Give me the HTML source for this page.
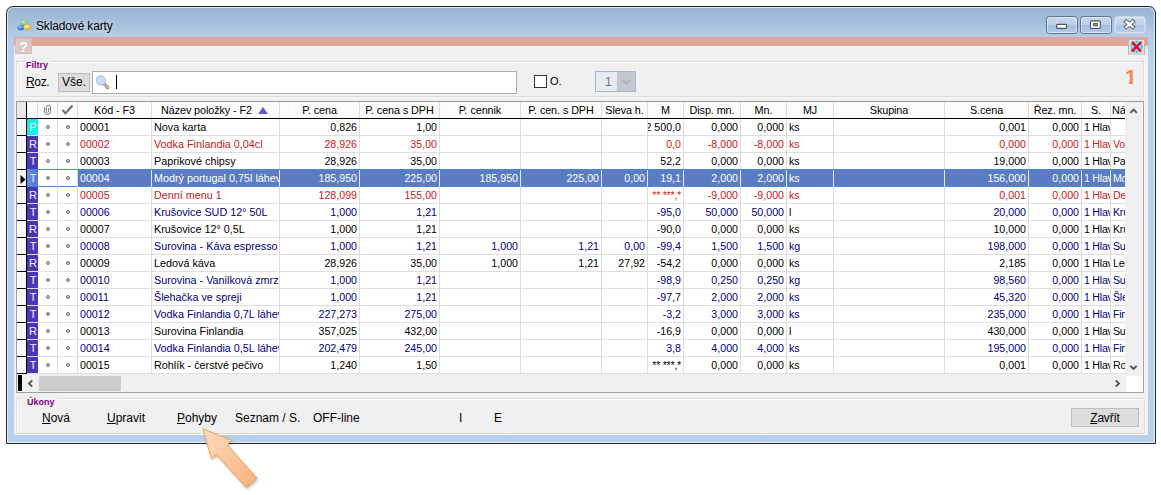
<!DOCTYPE html>
<html lang="cs">
<head>
<meta charset="utf-8">
<title>Skladové karty</title>
<style>
html,body{margin:0;padding:0;background:#fff;}
body{width:1161px;height:495px;position:relative;overflow:hidden;font-family:"Liberation Sans",sans-serif;color:#000;}
.abs,.abs *{position:absolute;}
div{box-sizing:border-box;}
#win{position:absolute;left:6px;top:6px;width:1150px;height:438px;border:1px solid #20262c;border-radius:7px 7px 0 0;
 background:linear-gradient(#98b3d2 0px,#a3bcd9 12px,#b2cae6 26px,#b6ceea 34px,#bad2ec 60px,#b7d0ec 100%);box-shadow:inset 0 0 0 1px rgba(255,255,255,.65);}
#client{position:absolute;left:14px;top:37px;width:1134px;height:398px;background:#f0f0f0;}
#title{position:absolute;left:36px;top:18px;font-size:12px;line-height:16px;letter-spacing:-.15px;white-space:nowrap;color:#000;text-shadow:0 0 5px rgba(255,255,255,.75);}
#pink{position:absolute;left:14px;top:37px;width:1134px;height:9px;background:#dea69b;}
#help{position:absolute;left:15px;top:38px;width:17px;height:16px;background:#dcc9c5;border:1px solid #d3bdb8;color:#fff;font-weight:bold;font-size:14px;line-height:17px;text-align:center;}
.cap{position:absolute;top:16px;height:18px;width:32px;border:1px solid #5a7391;border-radius:3.5px;
 background:linear-gradient(#c6d8ed 0%,#bdd1e9 46%,#a4bddb 52%,#b3cae4 100%);box-shadow:inset 0 0 0 1px rgba(255,255,255,.5);}
.gb{position:absolute;border:1px solid #dcdcdc;box-shadow:inset 1px 1px 0 #fafafa, 1px 1px 0 #fafafa;}
.gbl{position:absolute;font-size:9px;font-weight:bold;color:#800080;line-height:10px;background:#f0f0f0;padding:0 2px;white-space:nowrap;}
.t13{position:absolute;font-size:12px;line-height:16px;white-space:nowrap;}
.btn{position:absolute;background:#dddddd;border:1px solid #bdbdbd;font-size:12px;text-align:center;}
u{text-decoration:underline;text-underline-offset:1px;}
#grid{position:absolute;left:16px;top:101px;width:1128px;height:292px;background:#fff;border:1px solid #a0a0a0;border-top-color:#9a9a9a;overflow:hidden;}
#gridin{position:absolute;left:-17px;top:-102px;width:1161px;height:495px;}
.row{position:absolute;left:17px;width:1108px;height:17px;border-bottom:1px solid #dedede;font-size:10.65px;line-height:16px;letter-spacing:0;white-space:nowrap;overflow:hidden;}
.row .c{position:absolute;top:0;height:16px;overflow:hidden;white-space:nowrap;}
.vl{position:absolute;top:102px;width:1px;height:272px;background:#dcdcdc;}
.hd{position:absolute;top:102px;height:16px;font-size:10.8px;line-height:17px;letter-spacing:-.08px;text-align:center;white-space:nowrap;overflow:hidden;color:#000;}
.ind{position:absolute;left:17px;width:9px;height:17px;background:#f7f7f7;border-bottom:1px solid #000;box-shadow:inset 1px 1px 0 #fff;}
.dot{position:absolute;top:6px;width:4px;height:4px;border-radius:50%;border:1px solid #707070;background:#d0d0d0;}
</style>
</head>
<body>
<div id="win"></div>
<div id="client"></div>
<div id="pink"></div>
<svg style="position:absolute;left:16px;top:19px" width="17" height="12.4" viewBox="0 0 17 14" preserveAspectRatio="none">
<defs>
<radialGradient id="gb" cx="40%" cy="35%" r="70%"><stop offset="0" stop-color="#8fc4ff"/><stop offset="1" stop-color="#1f5fd0"/></radialGradient>
<radialGradient id="gy" cx="40%" cy="35%" r="70%"><stop offset="0" stop-color="#fff0a0"/><stop offset="1" stop-color="#d9a520"/></radialGradient>
<radialGradient id="gg" cx="40%" cy="35%" r="70%"><stop offset="0" stop-color="#d8ffb0"/><stop offset="1" stop-color="#4cae3c"/></radialGradient>
</defs>
<ellipse cx="8.2" cy="4.4" rx="3.2" ry="2.9" fill="url(#gg)"/>
<ellipse cx="4.8" cy="9.6" rx="3.5" ry="3.2" fill="url(#gb)"/>
<ellipse cx="11.4" cy="9.4" rx="3.8" ry="3.4" fill="url(#gy)"/>
</svg>
<div id="title">Skladové karty</div>
<div class="cap" style="left:1046px"></div>
<div class="cap" style="left:1080px"></div>
<div class="cap" style="left:1114px;border-color:#c4d5e9;background:linear-gradient(#c9daee 0%,#c0d3ea 46%,#b0c7e2 52%,#bad0e8 100%);box-shadow:inset 0 0 0 1px rgba(255,255,255,.35)"></div>
<svg style="position:absolute;left:1040px;top:10px" width="110" height="30" viewBox="0 0 110 30">
<rect x="16.6" y="14.4" width="10" height="4" rx="1" fill="#fff" stroke="#4c525c" stroke-width="1.1"/>
<rect x="50.5" y="10.9" width="9.8" height="7.6" rx="1" fill="#fff" stroke="#4c525c" stroke-width="1.1"/>
<rect x="53.4" y="13.6" width="4" height="2.2" fill="#8d96a6" stroke="#4c525c" stroke-width=".9"/>
<g fill="none">
<path d="M84.6 10.4 L94.4 18.2 M94.4 10.4 L84.6 18.2" stroke="#5c626c" stroke-width="4.2"/>
<path d="M85.4 11 L93.6 17.6 M93.6 11 L85.4 17.6" stroke="#fff" stroke-width="2.3"/>
</g>
</svg>
<div id="help">?</div>
<svg style="position:absolute;left:1128px;top:39px" width="17" height="16" viewBox="0 0 17 16">
<rect x="0.5" y="0.5" width="16" height="14.5" fill="#e2e2e2" stroke="#b8b8b8"/>
<circle cx="8.6" cy="7.8" r="5.4" fill="#8fd6f2" stroke="#30a6dc" stroke-width="1.2" stroke-dasharray="2.2 1.2"/>
<path d="M4.6 3.6 L12.4 11.8 M12.6 3.6 L4.4 11.8" stroke="#dc1230" stroke-width="2.4" stroke-linecap="round"/>
</svg>
<div class="gb" style="left:16px;top:61px;width:1128px;height:36px"></div>
<div class="gbl" style="left:24px;top:60px">Filtry</div>
<div class="t13" style="left:26px;top:74px;letter-spacing:-.35px"><u>R</u>oz.</div>
<div class="btn" style="left:58px;top:73px;width:32px;height:19px;line-height:17px">Vše.</div>
<div style="position:absolute;left:92px;top:71px;width:425px;height:23px;background:#fff;border:1px solid #abadb3;"></div>
<svg style="position:absolute;left:94px;top:73px" width="18" height="18" viewBox="0 0 18 18">
<path d="M10 10.6 L13.6 14.6" stroke="#9a8456" stroke-width="3.2" stroke-linecap="round"/>
<path d="M10 10.6 L13.6 14.6" stroke="#d8bd84" stroke-width="1.8" stroke-linecap="round"/>
<circle cx="6.8" cy="7.4" r="4.5" fill="#c9defa" stroke="#a9c5ea" stroke-width="1.3"/>
</svg>
<div style="position:absolute;left:116px;top:75px;width:1px;height:14px;background:#000"></div>
<div style="position:absolute;left:534px;top:75px;width:13px;height:13px;background:#fff;border:1px solid #333"></div>
<div style="position:absolute;left:550px;top:74px;font-size:11px;line-height:14px">O.</div>
<div style="position:absolute;left:595px;top:71px;width:41px;height:21px;background:#e6eaf2;border:1px solid #a8b4ca"></div>
<div style="position:absolute;left:617px;top:72px;width:18px;height:19px;background:#c3c7cf"></div>
<div style="position:absolute;left:605px;top:75px;font-size:12px;line-height:15px;color:#777">1</div>
<svg style="position:absolute;left:621px;top:78px" width="11" height="8"><path d="M1.5 1.5 L5.5 5.5 L9.5 1.5" fill="none" stroke="#aab0ba" stroke-width="1.6"/></svg>
<div style="position:absolute;left:1125px;top:66px;font-size:21px;line-height:22px;font-weight:bold;color:#ee8a50">1</div>
<div style="position:absolute;left:1125px;top:82px;width:4px;height:3px;background:#f0f0f0"></div>
<div style="position:absolute;left:1133px;top:82px;width:5px;height:3px;background:#f0f0f0"></div>
<div id="grid"><div id="gridin">
<div style="position:absolute;left:17px;top:102px;width:1108px;height:16px;background:#fbfbfb"></div>
<div style="position:absolute;left:17px;top:102px;width:9px;height:16px;background:#e9e9e9"></div>
<div class="hd" style="left:78px;width:73px">Kód - F3</div>
<div class="hd" style="left:152px;width:127px;text-align:left;padding-left:9px">Název položky - F2</div>
<svg style="position:absolute;left:258px;top:107px" width="10" height="7"><path d="M5 0 L10 7 L0 7 Z" fill="#5f5cc0"/></svg>
<div class="hd" style="left:280px;width:79px">P. cena</div>
<div class="hd" style="left:360px;width:79px">P. cena s DPH</div>
<div class="hd" style="left:440px;width:80px">P. cennik</div>
<div class="hd" style="left:521px;width:80px">P. cen. s DPH</div>
<div class="hd" style="left:602px;width:45px">Sleva h.</div>
<div class="hd" style="left:648px;width:35px">M</div>
<div class="hd" style="left:684px;width:56px">Disp. mn.</div>
<div class="hd" style="left:741px;width:45px">Mn.</div>
<div class="hd" style="left:787px;width:46px">MJ</div>
<div class="hd" style="left:834px;width:110px">Skupina</div>
<div class="hd" style="left:945px;width:83px">S.cena</div>
<div class="hd" style="left:1029px;width:52px">Řez. mn.</div>
<div class="hd" style="left:1082px;width:28px">S.</div>
<div class="hd" style="left:1111px;width:14px;text-align:left;padding-left:1px">Ná.</div>
<svg style="position:absolute;left:42px;top:103px" width="11" height="13" viewBox="0 0 11 13"><path d="M2.5 4.5 V8.5 A3 3 0 0 0 8.5 8.5 V3.8 A2.2 2.2 0 0 0 4.3 3.8 V8.3 A1.2 1.2 0 0 0 6.7 8.3 V4.5" fill="none" stroke="#7a7a7a" stroke-width="1"/></svg>
<svg style="position:absolute;left:61px;top:104px" width="13" height="11" viewBox="0 0 13 11"><path d="M1.5 6 L4.5 9.3 L11.5 1.5" fill="none" stroke="#6c6c6c" stroke-width="2"/></svg>
<div class="row" style="top:119px;color:#000000;"><div class="c" style="left:10px;width:11px;background:#0cf0e6;color:#f4f4ff;text-align:center;font-size:11px;letter-spacing:0;padding-left:1px">P</div><div class="c" style="left:21px;width:19px;background:#fff"><div class="dot" style="left:8px"></div></div><div class="c" style="left:41px;width:19px;background:#fff"><div class="dot" style="left:8px"></div></div><div class="c" style="left:61px;width:73px;text-align:left;padding-left:2px;">00001</div><div class="c" style="left:135px;width:127px;text-align:left;padding-left:2px;font-size:10.8px;">Nova karta</div><div class="c" style="left:263px;width:79px;text-align:right;padding-right:2px;">0,826</div><div class="c" style="left:343px;width:79px;text-align:right;padding-right:2px;">1,00</div><div class="c" style="left:423px;width:80px;text-align:right;padding-right:2px;"></div><div class="c" style="left:504px;width:80px;text-align:right;padding-right:2px;"></div><div class="c" style="left:585px;width:45px;text-align:right;padding-right:2px;"></div><div class="c" style="left:631px;width:35px;text-align:right;padding-right:2px;display:flex;justify-content:flex-end;">2 500,0</div><div class="c" style="left:667px;width:56px;text-align:right;padding-right:2px;">0,000</div><div class="c" style="left:724px;width:45px;text-align:right;padding-right:2px;">0,000</div><div class="c" style="left:770px;width:46px;text-align:left;padding-left:2px;">ks</div><div class="c" style="left:817px;width:110px;text-align:left;padding-left:2px;"></div><div class="c" style="left:928px;width:83px;text-align:right;padding-right:2px;">0,001</div><div class="c" style="left:1012px;width:52px;text-align:right;padding-right:2px;">0,000</div><div class="c" style="left:1065px;width:28px;text-align:left;padding-left:2px;letter-spacing:-.25px;">1 Hlavní</div><div class="c" style="left:1094px;width:34px;text-align:left;padding-left:2px;letter-spacing:-.25px;"></div></div>
<div class="row" style="top:136px;color:#cc2020;"><div class="c" style="left:10px;width:11px;background:#4537b4;color:#f4f4ff;text-align:center;font-size:11px;letter-spacing:0;padding-left:1px">R</div><div class="c" style="left:21px;width:19px;background:#fff"><div class="dot" style="left:8px"></div></div><div class="c" style="left:41px;width:19px;background:#fff"><div class="dot" style="left:8px"></div></div><div class="c" style="left:61px;width:73px;text-align:left;padding-left:2px;">00002</div><div class="c" style="left:135px;width:127px;text-align:left;padding-left:2px;font-size:10.8px;">Vodka Finlandia 0,04cl</div><div class="c" style="left:263px;width:79px;text-align:right;padding-right:2px;">28,926</div><div class="c" style="left:343px;width:79px;text-align:right;padding-right:2px;">35,00</div><div class="c" style="left:423px;width:80px;text-align:right;padding-right:2px;"></div><div class="c" style="left:504px;width:80px;text-align:right;padding-right:2px;"></div><div class="c" style="left:585px;width:45px;text-align:right;padding-right:2px;"></div><div class="c" style="left:631px;width:35px;text-align:right;padding-right:2px;">0,0</div><div class="c" style="left:667px;width:56px;text-align:right;padding-right:2px;">-8,000</div><div class="c" style="left:724px;width:45px;text-align:right;padding-right:2px;">-8,000</div><div class="c" style="left:770px;width:46px;text-align:left;padding-left:2px;">ks</div><div class="c" style="left:817px;width:110px;text-align:left;padding-left:2px;"></div><div class="c" style="left:928px;width:83px;text-align:right;padding-right:2px;">0,000</div><div class="c" style="left:1012px;width:52px;text-align:right;padding-right:2px;">0,000</div><div class="c" style="left:1065px;width:28px;text-align:left;padding-left:2px;letter-spacing:-.25px;">1 Hlavní</div><div class="c" style="left:1094px;width:34px;text-align:left;padding-left:2px;letter-spacing:-.25px;">Vodka</div></div>
<div class="row" style="top:153px;color:#000000;"><div class="c" style="left:10px;width:11px;background:#4739b8;color:#f4f4ff;text-align:center;font-size:11px;letter-spacing:0;padding-left:1px">T</div><div class="c" style="left:21px;width:19px;background:#fff"><div class="dot" style="left:8px"></div></div><div class="c" style="left:41px;width:19px;background:#fff"><div class="dot" style="left:8px"></div></div><div class="c" style="left:61px;width:73px;text-align:left;padding-left:2px;">00003</div><div class="c" style="left:135px;width:127px;text-align:left;padding-left:2px;font-size:10.8px;">Paprikové chipsy</div><div class="c" style="left:263px;width:79px;text-align:right;padding-right:2px;">28,926</div><div class="c" style="left:343px;width:79px;text-align:right;padding-right:2px;">35,00</div><div class="c" style="left:423px;width:80px;text-align:right;padding-right:2px;"></div><div class="c" style="left:504px;width:80px;text-align:right;padding-right:2px;"></div><div class="c" style="left:585px;width:45px;text-align:right;padding-right:2px;"></div><div class="c" style="left:631px;width:35px;text-align:right;padding-right:2px;">52,2</div><div class="c" style="left:667px;width:56px;text-align:right;padding-right:2px;">0,000</div><div class="c" style="left:724px;width:45px;text-align:right;padding-right:2px;">0,000</div><div class="c" style="left:770px;width:46px;text-align:left;padding-left:2px;">ks</div><div class="c" style="left:817px;width:110px;text-align:left;padding-left:2px;"></div><div class="c" style="left:928px;width:83px;text-align:right;padding-right:2px;">19,000</div><div class="c" style="left:1012px;width:52px;text-align:right;padding-right:2px;">0,000</div><div class="c" style="left:1065px;width:28px;text-align:left;padding-left:2px;letter-spacing:-.25px;">1 Hlavní</div><div class="c" style="left:1094px;width:34px;text-align:left;padding-left:2px;letter-spacing:-.25px;">Paprikové</div></div>
<div class="row" style="top:170px;color:#ffffff;border-bottom-color:#4a86d8;"><div class="c" style="left:10px;width:11px;background:linear-gradient(90deg,#6a8fe0,#5174cf);color:#f4f4ff;text-align:center;font-size:11px;letter-spacing:0;padding-left:1px">T</div><div class="c" style="left:21px;width:19px;background:#fff"><div class="dot" style="left:8px"></div></div><div class="c" style="left:41px;width:19px;background:#fff"><div class="dot" style="left:8px"></div></div><div class="c" style="left:61px;width:73px;text-align:left;padding-left:2px;background:#5b7cc3;">00004</div><div class="c" style="left:135px;width:127px;text-align:left;padding-left:2px;background:#5b7cc3;font-size:10.8px;">Modrý portugal 0,75l láhev</div><div class="c" style="left:263px;width:79px;text-align:right;padding-right:2px;background:#5b7cc3;">185,950</div><div class="c" style="left:343px;width:79px;text-align:right;padding-right:2px;background:#5b7cc3;">225,00</div><div class="c" style="left:423px;width:80px;text-align:right;padding-right:2px;background:#5b7cc3;">185,950</div><div class="c" style="left:504px;width:80px;text-align:right;padding-right:2px;background:#5b7cc3;">225,00</div><div class="c" style="left:585px;width:45px;text-align:right;padding-right:2px;background:#5b7cc3;">0,00</div><div class="c" style="left:631px;width:35px;text-align:right;padding-right:2px;background:#5b7cc3;">19,1</div><div class="c" style="left:667px;width:56px;text-align:right;padding-right:2px;background:#5b7cc3;">2,000</div><div class="c" style="left:724px;width:45px;text-align:right;padding-right:2px;background:#5b7cc3;">2,000</div><div class="c" style="left:770px;width:46px;text-align:left;padding-left:2px;background:#5b7cc3;">ks</div><div class="c" style="left:817px;width:110px;text-align:left;padding-left:2px;background:#5b7cc3;"></div><div class="c" style="left:928px;width:83px;text-align:right;padding-right:2px;background:#5b7cc3;">156,000</div><div class="c" style="left:1012px;width:52px;text-align:right;padding-right:2px;background:#5b7cc3;">0,000</div><div class="c" style="left:1065px;width:28px;text-align:left;padding-left:2px;background:#5b7cc3;letter-spacing:-.25px;">1 Hlavní</div><div class="c" style="left:1094px;width:34px;text-align:left;padding-left:2px;background:#5b7cc3;letter-spacing:-.25px;">Modrý</div></div>
<div class="row" style="top:187px;color:#cc2020;"><div class="c" style="left:10px;width:11px;background:#4537b4;color:#f4f4ff;text-align:center;font-size:11px;letter-spacing:0;padding-left:1px">R</div><div class="c" style="left:21px;width:19px;background:#fff"><div class="dot" style="left:8px"></div></div><div class="c" style="left:41px;width:19px;background:#fff"><div class="dot" style="left:8px"></div></div><div class="c" style="left:61px;width:73px;text-align:left;padding-left:2px;">00005</div><div class="c" style="left:135px;width:127px;text-align:left;padding-left:2px;font-size:10.8px;">Denní menu 1</div><div class="c" style="left:263px;width:79px;text-align:right;padding-right:2px;">128,099</div><div class="c" style="left:343px;width:79px;text-align:right;padding-right:2px;">155,00</div><div class="c" style="left:423px;width:80px;text-align:right;padding-right:2px;"></div><div class="c" style="left:504px;width:80px;text-align:right;padding-right:2px;"></div><div class="c" style="left:585px;width:45px;text-align:right;padding-right:2px;"></div><div class="c" style="left:631px;width:35px;text-align:right;padding-right:2px;letter-spacing:-.25px;">** ***,*</div><div class="c" style="left:667px;width:56px;text-align:right;padding-right:2px;">-9,000</div><div class="c" style="left:724px;width:45px;text-align:right;padding-right:2px;">-9,000</div><div class="c" style="left:770px;width:46px;text-align:left;padding-left:2px;">ks</div><div class="c" style="left:817px;width:110px;text-align:left;padding-left:2px;"></div><div class="c" style="left:928px;width:83px;text-align:right;padding-right:2px;">0,001</div><div class="c" style="left:1012px;width:52px;text-align:right;padding-right:2px;">0,000</div><div class="c" style="left:1065px;width:28px;text-align:left;padding-left:2px;letter-spacing:-.25px;">1 Hlavní</div><div class="c" style="left:1094px;width:34px;text-align:left;padding-left:2px;letter-spacing:-.25px;">Denní</div></div>
<div class="row" style="top:204px;color:#000080;"><div class="c" style="left:10px;width:11px;background:#4739b8;color:#f4f4ff;text-align:center;font-size:11px;letter-spacing:0;padding-left:1px">T</div><div class="c" style="left:21px;width:19px;background:#fff"><div class="dot" style="left:8px"></div></div><div class="c" style="left:41px;width:19px;background:#fff"><div class="dot" style="left:8px"></div></div><div class="c" style="left:61px;width:73px;text-align:left;padding-left:2px;">00006</div><div class="c" style="left:135px;width:127px;text-align:left;padding-left:2px;font-size:10.8px;">Krušovice SUD 12° 50L</div><div class="c" style="left:263px;width:79px;text-align:right;padding-right:2px;">1,000</div><div class="c" style="left:343px;width:79px;text-align:right;padding-right:2px;">1,21</div><div class="c" style="left:423px;width:80px;text-align:right;padding-right:2px;"></div><div class="c" style="left:504px;width:80px;text-align:right;padding-right:2px;"></div><div class="c" style="left:585px;width:45px;text-align:right;padding-right:2px;"></div><div class="c" style="left:631px;width:35px;text-align:right;padding-right:2px;">-95,0</div><div class="c" style="left:667px;width:56px;text-align:right;padding-right:2px;">50,000</div><div class="c" style="left:724px;width:45px;text-align:right;padding-right:2px;">50,000</div><div class="c" style="left:770px;width:46px;text-align:left;padding-left:2px;">l</div><div class="c" style="left:817px;width:110px;text-align:left;padding-left:2px;"></div><div class="c" style="left:928px;width:83px;text-align:right;padding-right:2px;">20,000</div><div class="c" style="left:1012px;width:52px;text-align:right;padding-right:2px;">0,000</div><div class="c" style="left:1065px;width:28px;text-align:left;padding-left:2px;letter-spacing:-.25px;">1 Hlavní</div><div class="c" style="left:1094px;width:34px;text-align:left;padding-left:2px;letter-spacing:-.25px;">Krušovice</div></div>
<div class="row" style="top:221px;color:#000000;"><div class="c" style="left:10px;width:11px;background:#4537b4;color:#f4f4ff;text-align:center;font-size:11px;letter-spacing:0;padding-left:1px">R</div><div class="c" style="left:21px;width:19px;background:#fff"><div class="dot" style="left:8px"></div></div><div class="c" style="left:41px;width:19px;background:#fff"><div class="dot" style="left:8px"></div></div><div class="c" style="left:61px;width:73px;text-align:left;padding-left:2px;">00007</div><div class="c" style="left:135px;width:127px;text-align:left;padding-left:2px;font-size:10.8px;">Krušovice 12° 0,5L</div><div class="c" style="left:263px;width:79px;text-align:right;padding-right:2px;">1,000</div><div class="c" style="left:343px;width:79px;text-align:right;padding-right:2px;">1,21</div><div class="c" style="left:423px;width:80px;text-align:right;padding-right:2px;"></div><div class="c" style="left:504px;width:80px;text-align:right;padding-right:2px;"></div><div class="c" style="left:585px;width:45px;text-align:right;padding-right:2px;"></div><div class="c" style="left:631px;width:35px;text-align:right;padding-right:2px;">-90,0</div><div class="c" style="left:667px;width:56px;text-align:right;padding-right:2px;">0,000</div><div class="c" style="left:724px;width:45px;text-align:right;padding-right:2px;">0,000</div><div class="c" style="left:770px;width:46px;text-align:left;padding-left:2px;">ks</div><div class="c" style="left:817px;width:110px;text-align:left;padding-left:2px;"></div><div class="c" style="left:928px;width:83px;text-align:right;padding-right:2px;">10,000</div><div class="c" style="left:1012px;width:52px;text-align:right;padding-right:2px;">0,000</div><div class="c" style="left:1065px;width:28px;text-align:left;padding-left:2px;letter-spacing:-.25px;">1 Hlavní</div><div class="c" style="left:1094px;width:34px;text-align:left;padding-left:2px;letter-spacing:-.25px;">Krušovice</div></div>
<div class="row" style="top:238px;color:#000080;"><div class="c" style="left:10px;width:11px;background:#4739b8;color:#f4f4ff;text-align:center;font-size:11px;letter-spacing:0;padding-left:1px">T</div><div class="c" style="left:21px;width:19px;background:#fff"><div class="dot" style="left:8px"></div></div><div class="c" style="left:41px;width:19px;background:#fff"><div class="dot" style="left:8px"></div></div><div class="c" style="left:61px;width:73px;text-align:left;padding-left:2px;">00008</div><div class="c" style="left:135px;width:127px;text-align:left;padding-left:2px;font-size:10.8px;">Surovina - Káva espresso</div><div class="c" style="left:263px;width:79px;text-align:right;padding-right:2px;">1,000</div><div class="c" style="left:343px;width:79px;text-align:right;padding-right:2px;">1,21</div><div class="c" style="left:423px;width:80px;text-align:right;padding-right:2px;">1,000</div><div class="c" style="left:504px;width:80px;text-align:right;padding-right:2px;">1,21</div><div class="c" style="left:585px;width:45px;text-align:right;padding-right:2px;">0,00</div><div class="c" style="left:631px;width:35px;text-align:right;padding-right:2px;">-99,4</div><div class="c" style="left:667px;width:56px;text-align:right;padding-right:2px;">1,500</div><div class="c" style="left:724px;width:45px;text-align:right;padding-right:2px;">1,500</div><div class="c" style="left:770px;width:46px;text-align:left;padding-left:2px;">kg</div><div class="c" style="left:817px;width:110px;text-align:left;padding-left:2px;"></div><div class="c" style="left:928px;width:83px;text-align:right;padding-right:2px;">198,000</div><div class="c" style="left:1012px;width:52px;text-align:right;padding-right:2px;">0,000</div><div class="c" style="left:1065px;width:28px;text-align:left;padding-left:2px;letter-spacing:-.25px;">1 Hlavní</div><div class="c" style="left:1094px;width:34px;text-align:left;padding-left:2px;letter-spacing:-.25px;">Surovina</div></div>
<div class="row" style="top:255px;color:#000000;"><div class="c" style="left:10px;width:11px;background:#4537b4;color:#f4f4ff;text-align:center;font-size:11px;letter-spacing:0;padding-left:1px">R</div><div class="c" style="left:21px;width:19px;background:#fff"><div class="dot" style="left:8px"></div></div><div class="c" style="left:41px;width:19px;background:#fff"><div class="dot" style="left:8px"></div></div><div class="c" style="left:61px;width:73px;text-align:left;padding-left:2px;">00009</div><div class="c" style="left:135px;width:127px;text-align:left;padding-left:2px;font-size:10.8px;">Ledová káva</div><div class="c" style="left:263px;width:79px;text-align:right;padding-right:2px;">28,926</div><div class="c" style="left:343px;width:79px;text-align:right;padding-right:2px;">35,00</div><div class="c" style="left:423px;width:80px;text-align:right;padding-right:2px;">1,000</div><div class="c" style="left:504px;width:80px;text-align:right;padding-right:2px;">1,21</div><div class="c" style="left:585px;width:45px;text-align:right;padding-right:2px;">27,92</div><div class="c" style="left:631px;width:35px;text-align:right;padding-right:2px;">-54,2</div><div class="c" style="left:667px;width:56px;text-align:right;padding-right:2px;">0,000</div><div class="c" style="left:724px;width:45px;text-align:right;padding-right:2px;">0,000</div><div class="c" style="left:770px;width:46px;text-align:left;padding-left:2px;">ks</div><div class="c" style="left:817px;width:110px;text-align:left;padding-left:2px;"></div><div class="c" style="left:928px;width:83px;text-align:right;padding-right:2px;">2,185</div><div class="c" style="left:1012px;width:52px;text-align:right;padding-right:2px;">0,000</div><div class="c" style="left:1065px;width:28px;text-align:left;padding-left:2px;letter-spacing:-.25px;">1 Hlavní</div><div class="c" style="left:1094px;width:34px;text-align:left;padding-left:2px;letter-spacing:-.25px;">Ledová</div></div>
<div class="row" style="top:272px;color:#000080;"><div class="c" style="left:10px;width:11px;background:#4739b8;color:#f4f4ff;text-align:center;font-size:11px;letter-spacing:0;padding-left:1px">T</div><div class="c" style="left:21px;width:19px;background:#fff"><div class="dot" style="left:8px"></div></div><div class="c" style="left:41px;width:19px;background:#fff"><div class="dot" style="left:8px"></div></div><div class="c" style="left:61px;width:73px;text-align:left;padding-left:2px;">00010</div><div class="c" style="left:135px;width:127px;text-align:left;padding-left:2px;font-size:10.8px;">Surovina - Vanilková zmrzlina</div><div class="c" style="left:263px;width:79px;text-align:right;padding-right:2px;">1,000</div><div class="c" style="left:343px;width:79px;text-align:right;padding-right:2px;">1,21</div><div class="c" style="left:423px;width:80px;text-align:right;padding-right:2px;"></div><div class="c" style="left:504px;width:80px;text-align:right;padding-right:2px;"></div><div class="c" style="left:585px;width:45px;text-align:right;padding-right:2px;"></div><div class="c" style="left:631px;width:35px;text-align:right;padding-right:2px;">-98,9</div><div class="c" style="left:667px;width:56px;text-align:right;padding-right:2px;">0,250</div><div class="c" style="left:724px;width:45px;text-align:right;padding-right:2px;">0,250</div><div class="c" style="left:770px;width:46px;text-align:left;padding-left:2px;">kg</div><div class="c" style="left:817px;width:110px;text-align:left;padding-left:2px;"></div><div class="c" style="left:928px;width:83px;text-align:right;padding-right:2px;">98,560</div><div class="c" style="left:1012px;width:52px;text-align:right;padding-right:2px;">0,000</div><div class="c" style="left:1065px;width:28px;text-align:left;padding-left:2px;letter-spacing:-.25px;">1 Hlavní</div><div class="c" style="left:1094px;width:34px;text-align:left;padding-left:2px;letter-spacing:-.25px;">Surovina</div></div>
<div class="row" style="top:289px;color:#000080;"><div class="c" style="left:10px;width:11px;background:#4739b8;color:#f4f4ff;text-align:center;font-size:11px;letter-spacing:0;padding-left:1px">T</div><div class="c" style="left:21px;width:19px;background:#fff"><div class="dot" style="left:8px"></div></div><div class="c" style="left:41px;width:19px;background:#fff"><div class="dot" style="left:8px"></div></div><div class="c" style="left:61px;width:73px;text-align:left;padding-left:2px;">00011</div><div class="c" style="left:135px;width:127px;text-align:left;padding-left:2px;font-size:10.8px;">Šlehačka ve spreji</div><div class="c" style="left:263px;width:79px;text-align:right;padding-right:2px;">1,000</div><div class="c" style="left:343px;width:79px;text-align:right;padding-right:2px;">1,21</div><div class="c" style="left:423px;width:80px;text-align:right;padding-right:2px;"></div><div class="c" style="left:504px;width:80px;text-align:right;padding-right:2px;"></div><div class="c" style="left:585px;width:45px;text-align:right;padding-right:2px;"></div><div class="c" style="left:631px;width:35px;text-align:right;padding-right:2px;">-97,7</div><div class="c" style="left:667px;width:56px;text-align:right;padding-right:2px;">2,000</div><div class="c" style="left:724px;width:45px;text-align:right;padding-right:2px;">2,000</div><div class="c" style="left:770px;width:46px;text-align:left;padding-left:2px;">ks</div><div class="c" style="left:817px;width:110px;text-align:left;padding-left:2px;"></div><div class="c" style="left:928px;width:83px;text-align:right;padding-right:2px;">45,320</div><div class="c" style="left:1012px;width:52px;text-align:right;padding-right:2px;">0,000</div><div class="c" style="left:1065px;width:28px;text-align:left;padding-left:2px;letter-spacing:-.25px;">1 Hlavní</div><div class="c" style="left:1094px;width:34px;text-align:left;padding-left:2px;letter-spacing:-.25px;">Šlehačka</div></div>
<div class="row" style="top:306px;color:#000080;"><div class="c" style="left:10px;width:11px;background:#4739b8;color:#f4f4ff;text-align:center;font-size:11px;letter-spacing:0;padding-left:1px">T</div><div class="c" style="left:21px;width:19px;background:#fff"><div class="dot" style="left:8px"></div></div><div class="c" style="left:41px;width:19px;background:#fff"><div class="dot" style="left:8px"></div></div><div class="c" style="left:61px;width:73px;text-align:left;padding-left:2px;">00012</div><div class="c" style="left:135px;width:127px;text-align:left;padding-left:2px;font-size:10.8px;">Vodka Finlandia 0,7L láhev</div><div class="c" style="left:263px;width:79px;text-align:right;padding-right:2px;">227,273</div><div class="c" style="left:343px;width:79px;text-align:right;padding-right:2px;">275,00</div><div class="c" style="left:423px;width:80px;text-align:right;padding-right:2px;"></div><div class="c" style="left:504px;width:80px;text-align:right;padding-right:2px;"></div><div class="c" style="left:585px;width:45px;text-align:right;padding-right:2px;"></div><div class="c" style="left:631px;width:35px;text-align:right;padding-right:2px;">-3,2</div><div class="c" style="left:667px;width:56px;text-align:right;padding-right:2px;">3,000</div><div class="c" style="left:724px;width:45px;text-align:right;padding-right:2px;">3,000</div><div class="c" style="left:770px;width:46px;text-align:left;padding-left:2px;">ks</div><div class="c" style="left:817px;width:110px;text-align:left;padding-left:2px;"></div><div class="c" style="left:928px;width:83px;text-align:right;padding-right:2px;">235,000</div><div class="c" style="left:1012px;width:52px;text-align:right;padding-right:2px;">0,000</div><div class="c" style="left:1065px;width:28px;text-align:left;padding-left:2px;letter-spacing:-.25px;">1 Hlavní</div><div class="c" style="left:1094px;width:34px;text-align:left;padding-left:2px;letter-spacing:-.25px;">Finlandia</div></div>
<div class="row" style="top:323px;color:#000000;"><div class="c" style="left:10px;width:11px;background:#4537b4;color:#f4f4ff;text-align:center;font-size:11px;letter-spacing:0;padding-left:1px">R</div><div class="c" style="left:21px;width:19px;background:#fff"><div class="dot" style="left:8px"></div></div><div class="c" style="left:41px;width:19px;background:#fff"><div class="dot" style="left:8px"></div></div><div class="c" style="left:61px;width:73px;text-align:left;padding-left:2px;">00013</div><div class="c" style="left:135px;width:127px;text-align:left;padding-left:2px;font-size:10.8px;">Surovina Finlandia</div><div class="c" style="left:263px;width:79px;text-align:right;padding-right:2px;">357,025</div><div class="c" style="left:343px;width:79px;text-align:right;padding-right:2px;">432,00</div><div class="c" style="left:423px;width:80px;text-align:right;padding-right:2px;"></div><div class="c" style="left:504px;width:80px;text-align:right;padding-right:2px;"></div><div class="c" style="left:585px;width:45px;text-align:right;padding-right:2px;"></div><div class="c" style="left:631px;width:35px;text-align:right;padding-right:2px;">-16,9</div><div class="c" style="left:667px;width:56px;text-align:right;padding-right:2px;">0,000</div><div class="c" style="left:724px;width:45px;text-align:right;padding-right:2px;">0,000</div><div class="c" style="left:770px;width:46px;text-align:left;padding-left:2px;">l</div><div class="c" style="left:817px;width:110px;text-align:left;padding-left:2px;"></div><div class="c" style="left:928px;width:83px;text-align:right;padding-right:2px;">430,000</div><div class="c" style="left:1012px;width:52px;text-align:right;padding-right:2px;">0,000</div><div class="c" style="left:1065px;width:28px;text-align:left;padding-left:2px;letter-spacing:-.25px;">1 Hlavní</div><div class="c" style="left:1094px;width:34px;text-align:left;padding-left:2px;letter-spacing:-.25px;">Surovina</div></div>
<div class="row" style="top:340px;color:#000080;"><div class="c" style="left:10px;width:11px;background:#4739b8;color:#f4f4ff;text-align:center;font-size:11px;letter-spacing:0;padding-left:1px">T</div><div class="c" style="left:21px;width:19px;background:#fff"><div class="dot" style="left:8px"></div></div><div class="c" style="left:41px;width:19px;background:#fff"><div class="dot" style="left:8px"></div></div><div class="c" style="left:61px;width:73px;text-align:left;padding-left:2px;">00014</div><div class="c" style="left:135px;width:127px;text-align:left;padding-left:2px;font-size:10.8px;">Vodka Finlandia 0,5L láhev</div><div class="c" style="left:263px;width:79px;text-align:right;padding-right:2px;">202,479</div><div class="c" style="left:343px;width:79px;text-align:right;padding-right:2px;">245,00</div><div class="c" style="left:423px;width:80px;text-align:right;padding-right:2px;"></div><div class="c" style="left:504px;width:80px;text-align:right;padding-right:2px;"></div><div class="c" style="left:585px;width:45px;text-align:right;padding-right:2px;"></div><div class="c" style="left:631px;width:35px;text-align:right;padding-right:2px;">3,8</div><div class="c" style="left:667px;width:56px;text-align:right;padding-right:2px;">4,000</div><div class="c" style="left:724px;width:45px;text-align:right;padding-right:2px;">4,000</div><div class="c" style="left:770px;width:46px;text-align:left;padding-left:2px;">ks</div><div class="c" style="left:817px;width:110px;text-align:left;padding-left:2px;"></div><div class="c" style="left:928px;width:83px;text-align:right;padding-right:2px;">195,000</div><div class="c" style="left:1012px;width:52px;text-align:right;padding-right:2px;">0,000</div><div class="c" style="left:1065px;width:28px;text-align:left;padding-left:2px;letter-spacing:-.25px;">1 Hlavní</div><div class="c" style="left:1094px;width:34px;text-align:left;padding-left:2px;letter-spacing:-.25px;">Finlandia</div></div>
<div class="row" style="top:357px;color:#000000;"><div class="c" style="left:10px;width:11px;background:#4739b8;color:#f4f4ff;text-align:center;font-size:11px;letter-spacing:0;padding-left:1px">T</div><div class="c" style="left:21px;width:19px;background:#fff"><div class="dot" style="left:8px"></div></div><div class="c" style="left:41px;width:19px;background:#fff"><div class="dot" style="left:8px"></div></div><div class="c" style="left:61px;width:73px;text-align:left;padding-left:2px;">00015</div><div class="c" style="left:135px;width:127px;text-align:left;padding-left:2px;font-size:10.8px;">Rohlík - čerstvé pečivo</div><div class="c" style="left:263px;width:79px;text-align:right;padding-right:2px;">1,240</div><div class="c" style="left:343px;width:79px;text-align:right;padding-right:2px;">1,50</div><div class="c" style="left:423px;width:80px;text-align:right;padding-right:2px;"></div><div class="c" style="left:504px;width:80px;text-align:right;padding-right:2px;"></div><div class="c" style="left:585px;width:45px;text-align:right;padding-right:2px;"></div><div class="c" style="left:631px;width:35px;text-align:right;padding-right:2px;letter-spacing:-.25px;">** ***,*</div><div class="c" style="left:667px;width:56px;text-align:right;padding-right:2px;">0,000</div><div class="c" style="left:724px;width:45px;text-align:right;padding-right:2px;">0,000</div><div class="c" style="left:770px;width:46px;text-align:left;padding-left:2px;">ks</div><div class="c" style="left:817px;width:110px;text-align:left;padding-left:2px;"></div><div class="c" style="left:928px;width:83px;text-align:right;padding-right:2px;">0,001</div><div class="c" style="left:1012px;width:52px;text-align:right;padding-right:2px;">0,000</div><div class="c" style="left:1065px;width:28px;text-align:left;padding-left:2px;letter-spacing:-.25px;">1 Hlavní</div><div class="c" style="left:1094px;width:34px;text-align:left;padding-left:2px;letter-spacing:-.25px;">Rohlík</div></div>
<div class="vl" style="left:37px;height:16px"></div>
<div class="vl" style="left:57px"></div>
<div class="vl" style="left:77px"></div>
<div class="vl" style="left:151px"></div>
<div class="vl" style="left:279px"></div>
<div class="vl" style="left:359px"></div>
<div class="vl" style="left:439px"></div>
<div class="vl" style="left:520px"></div>
<div class="vl" style="left:601px"></div>
<div class="vl" style="left:647px"></div>
<div class="vl" style="left:683px"></div>
<div class="vl" style="left:740px"></div>
<div class="vl" style="left:786px"></div>
<div class="vl" style="left:833px"></div>
<div class="vl" style="left:944px"></div>
<div class="vl" style="left:1028px"></div>
<div class="vl" style="left:1081px"></div>
<div class="vl" style="left:1110px"></div>
<div style="position:absolute;left:151px;top:171px;width:1px;height:15px;background:#e6ecf8"></div>
<div style="position:absolute;left:279px;top:171px;width:1px;height:15px;background:#e6ecf8"></div>
<div style="position:absolute;left:359px;top:171px;width:1px;height:15px;background:#e6ecf8"></div>
<div style="position:absolute;left:439px;top:171px;width:1px;height:15px;background:#e6ecf8"></div>
<div style="position:absolute;left:520px;top:171px;width:1px;height:15px;background:#e6ecf8"></div>
<div style="position:absolute;left:601px;top:171px;width:1px;height:15px;background:#e6ecf8"></div>
<div style="position:absolute;left:647px;top:171px;width:1px;height:15px;background:#e6ecf8"></div>
<div style="position:absolute;left:683px;top:171px;width:1px;height:15px;background:#e6ecf8"></div>
<div style="position:absolute;left:740px;top:171px;width:1px;height:15px;background:#e6ecf8"></div>
<div style="position:absolute;left:786px;top:171px;width:1px;height:15px;background:#e6ecf8"></div>
<div style="position:absolute;left:833px;top:171px;width:1px;height:15px;background:#e6ecf8"></div>
<div style="position:absolute;left:944px;top:171px;width:1px;height:15px;background:#e6ecf8"></div>
<div style="position:absolute;left:1028px;top:171px;width:1px;height:15px;background:#e6ecf8"></div>
<div style="position:absolute;left:1081px;top:171px;width:1px;height:15px;background:#e6ecf8"></div>
<div style="position:absolute;left:1110px;top:171px;width:1px;height:15px;background:#e6ecf8"></div>
<div style="position:absolute;left:27px;top:169px;width:1098px;height:1px;background:#4a86d8"></div>
<div class="ind" style="top:119px"></div>
<div class="ind" style="top:136px"></div>
<div class="ind" style="top:153px"></div>
<div class="ind" style="top:170px"></div>
<div class="ind" style="top:187px"></div>
<div class="ind" style="top:204px"></div>
<div class="ind" style="top:221px"></div>
<div class="ind" style="top:238px"></div>
<div class="ind" style="top:255px"></div>
<div class="ind" style="top:272px"></div>
<div class="ind" style="top:289px"></div>
<div class="ind" style="top:306px"></div>
<div class="ind" style="top:323px"></div>
<div class="ind" style="top:340px"></div>
<div class="ind" style="top:357px"></div>
<svg style="position:absolute;left:20px;top:175px" width="6" height="9"><path d="M0.5 0 L5.5 4.5 L0.5 9 Z" fill="#000"/></svg>
<div style="position:absolute;left:26px;top:102px;width:1px;height:272px;background:#000"></div>
<div style="position:absolute;left:17px;top:118px;width:1108px;height:1px;background:#000"></div>
<div style="position:absolute;left:1125px;top:102px;width:17px;height:274px;background:#f0f0f0"></div>
<svg style="position:absolute;left:1128px;top:107px" width="11" height="8"><path d="M2.4 5.8 L5.6 2.6 L8.8 5.8" fill="none" stroke="#555" stroke-width="1.9"/></svg>
<svg style="position:absolute;left:1128px;top:364px" width="11" height="8"><path d="M2.3 1.8 L5.5 5 L8.7 1.8" fill="none" stroke="#555" stroke-width="1.9"/></svg>
<div style="position:absolute;left:17px;top:374px;width:1109px;height:18px;background:#f0f0f0"></div>
<div style="position:absolute;left:18px;top:375px;width:4px;height:16px;background:#000"></div>
<div style="position:absolute;left:39px;top:376px;width:82px;height:15px;background:#cdcdcd"></div>
<svg style="position:absolute;left:26px;top:378px" width="8" height="11"><path d="M6.2 2.3 L3 5.5 L6.2 8.7" fill="none" stroke="#555" stroke-width="1.9"/></svg>
<svg style="position:absolute;left:1114px;top:378px" width="8" height="11"><path d="M1.8 2.3 L5 5.5 L1.8 8.7" fill="none" stroke="#555" stroke-width="1.9"/></svg>
</div></div>
<div class="gb" style="left:16px;top:398px;width:1129px;height:36px"></div>
<div class="gbl" style="left:25px;top:397px">Úkony</div>
<div class="t13" style="left:42px;top:410px"><u>N</u>ová</div>
<div class="t13" style="left:107px;top:410px"><u>U</u>pravit</div>
<div class="t13" style="left:177px;top:410px"><u>P</u>ohyby</div>
<div class="t13" style="left:235px;top:410px">Seznam / S.</div>
<div class="t13" style="left:313px;top:410px">OFF-line</div>
<div class="t13" style="left:459px;top:410px">I</div>
<div class="t13" style="left:494px;top:410px">E</div>
<div class="btn" style="left:1071px;top:408px;width:68px;height:19px;line-height:19px;letter-spacing:-.2px"><u>Z</u>avřít</div>
<svg style="position:absolute;left:190px;top:418px" width="85" height="77" viewBox="190 418 85 77">
<defs>
<linearGradient id="ag" gradientUnits="userSpaceOnUse" x1="203" y1="429" x2="252" y2="483"><stop offset="0" stop-color="#fedcc0"/><stop offset=".45" stop-color="#fccba3"/><stop offset="1" stop-color="#f9b582"/></linearGradient>
<filter id="sh" x="-20%" y="-20%" width="150%" height="150%"><feGaussianBlur stdDeviation="1.5"/></filter>
</defs>
<path d="M204.2 430.6 L233.2 442.2 L228.3 446.6 L258.3 479.9 L247.6 489.5 L217.6 456.2 L212.7 460.6 Z" fill="#000" opacity=".25" filter="url(#sh)"/>
<path d="M202.9 428.8 L231.9 440.4 L227 444.8 L257 478.1 L246.3 487.7 L216.3 454.4 L211.4 458.8 Z" fill="url(#ag)" stroke="#f0a35e" stroke-width="1" stroke-linejoin="round"/>
</svg>
</body>
</html>
